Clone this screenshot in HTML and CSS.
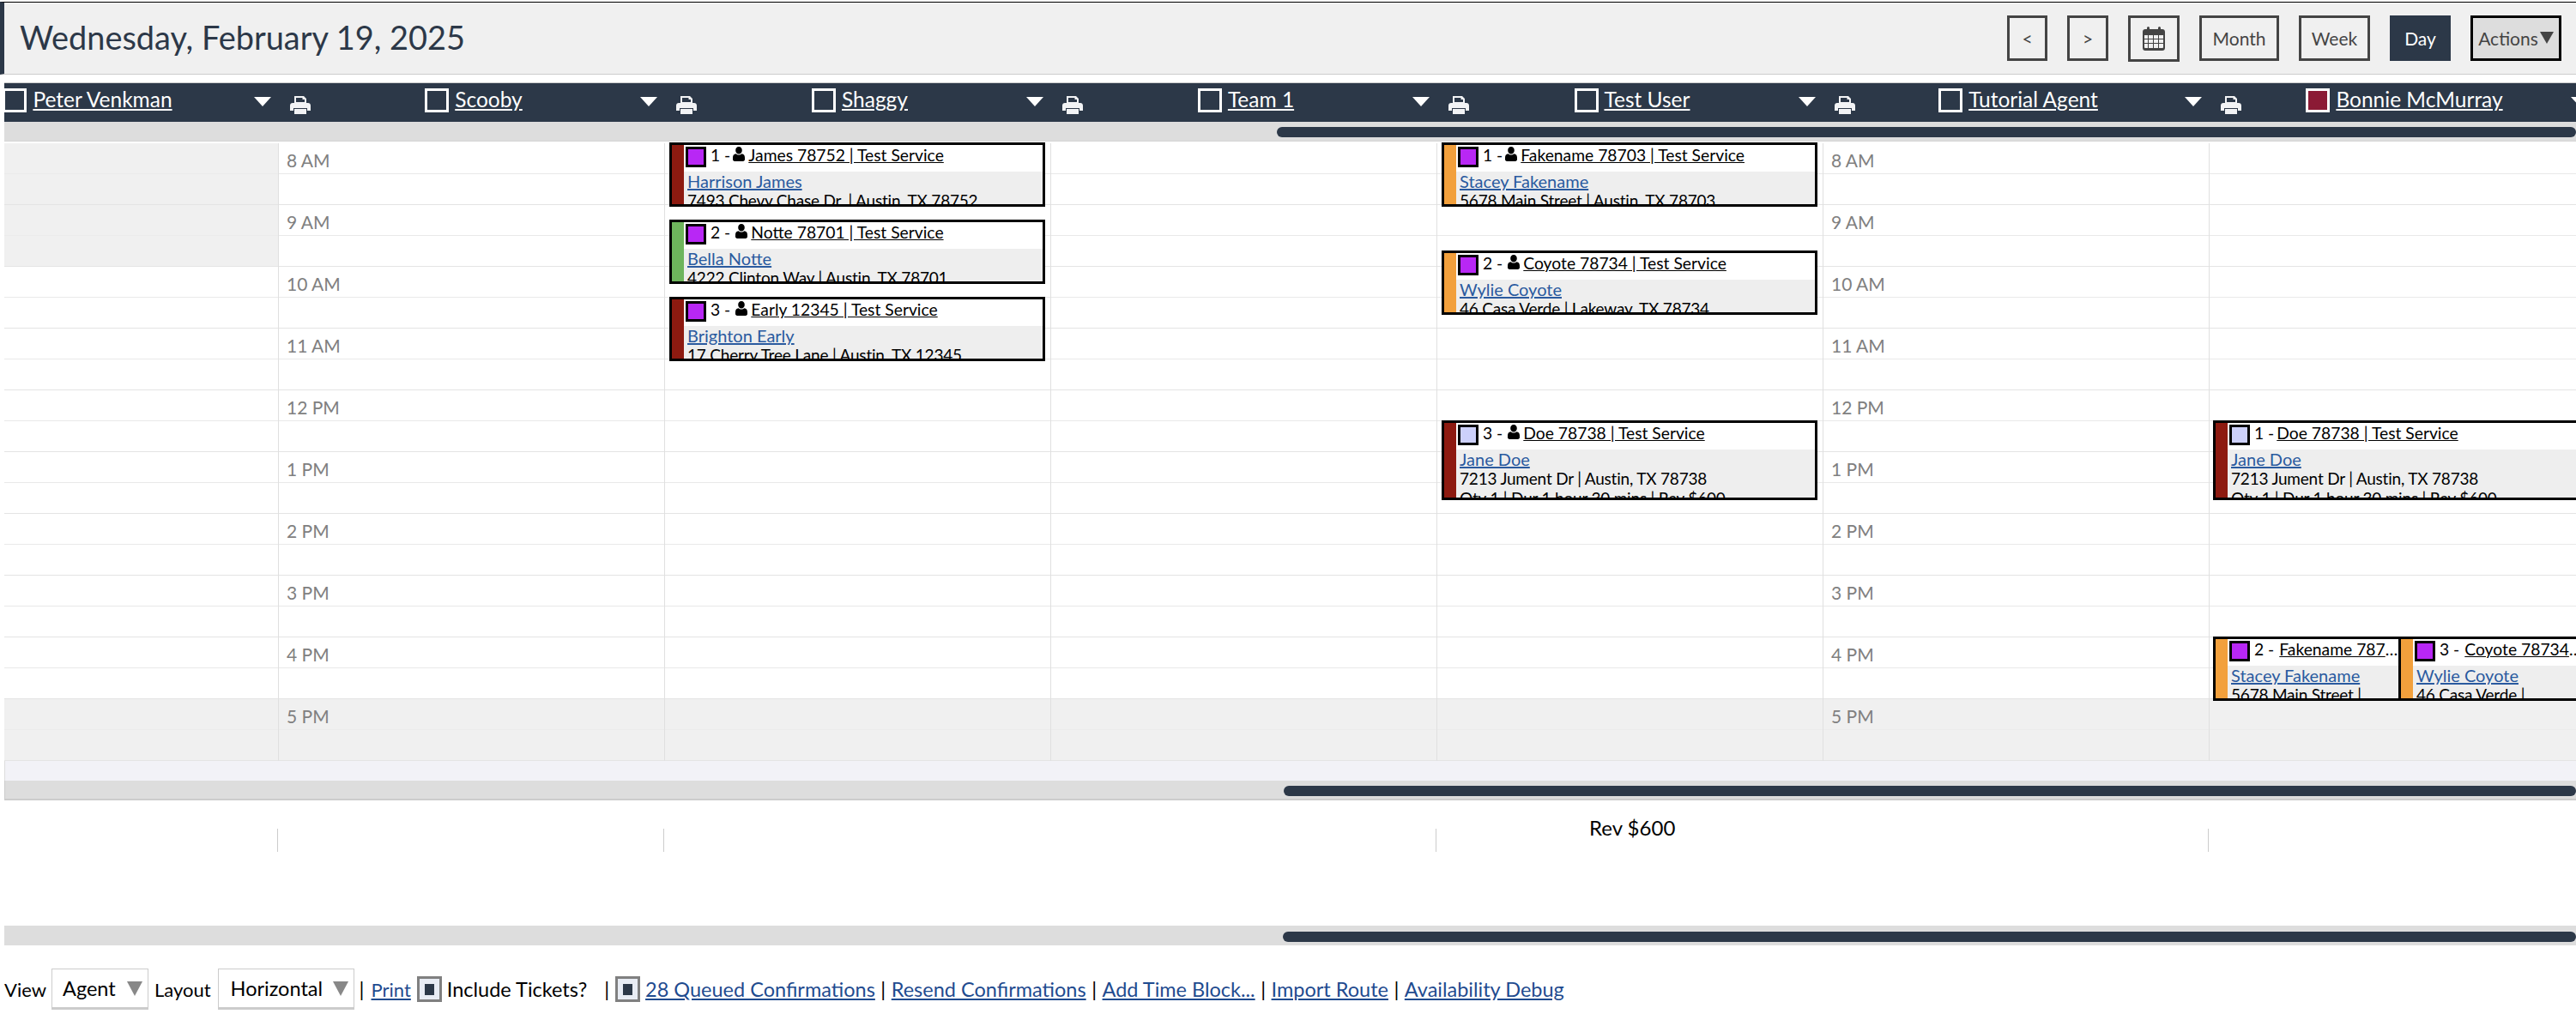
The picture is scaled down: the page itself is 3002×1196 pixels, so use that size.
FILE: index.html
```html
<!DOCTYPE html>
<html lang="en">
<head>
<meta charset="utf-8">
<title>Schedule</title>
<link rel="stylesheet" href="styles.css">
</head>
<body>
<svg class="defs" width="0" height="0" aria-hidden="true">
  <symbol id="user" viewBox="0 0 14 17"><path d="M7 0c2.300 0 3.800 1.800 3.800 4.200S9.300 8.600 7 8.600 3.200 6.600 3.200 4.200 4.700 0 7 0zM3.600 8.200C4.500 9.100 5.600 9.600 7 9.600s2.500-.5 3.400-1.400C12.700 8.400 14 10 14 12.800v2c0 1.300-.9 2.200-2.200 2.200H2.200C.9 17 0 16.100 0 14.800v-2C0 10 1.300 8.400 3.600 8.200z"/></symbol>
  <symbol id="printer" viewBox="0 0 24 22"><path d="M5 1h11l3 3v5H5zM7 3v5h10V5h-2.500V3z" fill-rule="evenodd"/><path d="M3 9h18c1.700 0 3 1.300 3 3v6h-4v-3H4v3H0v-6c0-1.700 1.300-3 3-3z"/><path d="M5 16h14v6H5z"/></symbol>
</svg>

<header class="topbar">
  <h1 class="date">Wednesday, February 19, 2025</h1>
  <nav class="views">
    <button class="btn btn-nav">&lt;</button>
    <button class="btn btn-nav btn-next">&gt;</button>
    <button class="btn btn-cal" aria-label="Calendar">
      <svg width="26" height="28" viewBox="0 0 26 28"><path fill="#444" fill-rule="evenodd" d="M5 3V1.500a1.500 1.500 0 0 1 3 0V3h10V1.500a1.500 1.500 0 0 1 3 0V3h2c1.700 0 3 1.300 3 3v19c0 1.700-1.300 3-3 3H3c-1.700 0-3-1.300-3-3V6c0-1.700 1.300-3 3-3zM2 10v4h4v-4zm5 0v4h5v-4zm6 0v4h5v-4zm6 0v4h5v-4zM2 15v4h4v-4zm5 0v4h5v-4zm6 0v4h5v-4zm6 0v4h5v-4zM2 20v4c0 .5.500 1 1 1h3v-5zm5 0v5h5v-5zm6 0v5h5v-5zm6 0v5h4c.5 0 1-.5 1-1v-4z"/></svg>
    </button>
    <button class="btn btn-month">Month</button>
    <button class="btn btn-week">Week</button>
    <button class="btn btn-day">Day</button>
    <button class="btn btn-actions">Actions<span class="tri-down"></span></button>
  </nav>
</header>

<main class="board">
  <div class="agents">
    <div class="agent"><div class="agent-name"><span class="check"></span><a href="#">Peter Venkman</a></div><span class="drop"></span><svg class="print"><use href="#printer"/></svg></div>
    <div class="agent"><div class="agent-name"><span class="check"></span><a href="#">Scooby</a></div><span class="drop"></span><svg class="print"><use href="#printer"/></svg></div>
    <div class="agent"><div class="agent-name"><span class="check"></span><a href="#">Shaggy</a></div><span class="drop"></span><svg class="print"><use href="#printer"/></svg></div>
    <div class="agent"><div class="agent-name"><span class="check"></span><a href="#">Team 1</a></div><span class="drop"></span><svg class="print"><use href="#printer"/></svg></div>
    <div class="agent"><div class="agent-name"><span class="check"></span><a href="#">Test User</a></div><span class="drop"></span><svg class="print"><use href="#printer"/></svg></div>
    <div class="agent"><div class="agent-name"><span class="check"></span><a href="#">Tutorial Agent</a></div><span class="drop"></span><svg class="print"><use href="#printer"/></svg></div>
    <div class="agent"><div class="agent-name"><span class="check check-red"></span><a href="#">Bonnie McMurray</a></div><span class="drop"></span><svg class="print"><use href="#printer"/></svg></div>
  </div>
  <div class="scroll scroll-top"><span class="thumb thumb-top"></span></div>

  <div class="grid">
    <section class="col">
      <div class="hour off"></div><div class="hour off"></div><div class="hour"></div><div class="hour"></div><div class="hour"></div>
      <div class="hour"></div><div class="hour"></div><div class="hour"></div><div class="hour"></div><div class="hour off"></div>
    </section>
    <section class="col">
      <div class="hour time">8 AM</div><div class="hour time">9 AM</div><div class="hour time">10 AM</div><div class="hour time">11 AM</div><div class="hour time">12 PM</div>
      <div class="hour time">1 PM</div><div class="hour time">2 PM</div><div class="hour time">3 PM</div><div class="hour time">4 PM</div><div class="hour time off">5 PM</div>
    </section>
    <section class="col">
      <div class="hour"></div><div class="hour"></div><div class="hour"></div><div class="hour"></div><div class="hour"></div>
      <div class="hour"></div><div class="hour"></div><div class="hour"></div><div class="hour"></div><div class="hour off"></div>
      <article class="event t166">
        <span class="bar bar-red"></span>
        <div class="event-main">
          <div class="event-head"><span class="mini"></span><span class="seq seq-one">1 -</span><svg class="user"><use href="#user"/></svg><a href="#">James 78752 | Test Service</a></div>
          <div class="event-body"><a href="#">Harrison James</a><br><span class="addr">7493 Chevy Chase Dr. | Austin, TX 78752</span></div>
        </div>
      </article>
      <article class="event t256">
        <span class="bar bar-green"></span>
        <div class="event-main">
          <div class="event-head"><span class="mini"></span><span class="seq">2 -</span><svg class="user"><use href="#user"/></svg><a href="#">Notte 78701 | Test Service</a></div>
          <div class="event-body"><a href="#">Bella Notte</a><br><span class="addr">4222 Clinton Way | Austin, TX 78701</span></div>
        </div>
      </article>
      <article class="event t346">
        <span class="bar bar-red"></span>
        <div class="event-main">
          <div class="event-head"><span class="mini"></span><span class="seq">3 -</span><svg class="user"><use href="#user"/></svg><a href="#">Early 12345 | Test Service</a></div>
          <div class="event-body"><a href="#">Brighton Early</a><br><span class="addr">17 Cherry Tree Lane | Austin, TX 12345</span></div>
        </div>
      </article>
    </section>
    <section class="col">
      <div class="hour"></div><div class="hour"></div><div class="hour"></div><div class="hour"></div><div class="hour"></div>
      <div class="hour"></div><div class="hour"></div><div class="hour"></div><div class="hour"></div><div class="hour off"></div>
    </section>
    <section class="col">
      <div class="hour"></div><div class="hour"></div><div class="hour"></div><div class="hour"></div><div class="hour"></div>
      <div class="hour"></div><div class="hour"></div><div class="hour"></div><div class="hour"></div><div class="hour off"></div>
      <article class="event t166">
        <span class="bar bar-orange"></span>
        <div class="event-main">
          <div class="event-head"><span class="mini"></span><span class="seq seq-one">1 -</span><svg class="user"><use href="#user"/></svg><a href="#">Fakename 78703 | Test Service</a></div>
          <div class="event-body"><a href="#">Stacey Fakename</a><br><span class="addr">5678 Main Street | Austin, TX 78703</span></div>
        </div>
      </article>
      <article class="event t292">
        <span class="bar bar-orange"></span>
        <div class="event-main">
          <div class="event-head"><span class="mini"></span><span class="seq">2 -</span><svg class="user"><use href="#user"/></svg><a href="#">Coyote 78734 | Test Service</a></div>
          <div class="event-body"><a href="#">Wylie Coyote</a><br><span class="addr">46 Casa Verde | Lakeway, TX 78734</span></div>
        </div>
      </article>
      <article class="event t490 tall">
        <span class="bar bar-red"></span>
        <div class="event-main">
          <div class="event-head"><span class="mini mini-pale"></span><span class="seq">3 -</span><svg class="user"><use href="#user"/></svg><a href="#">Doe 78738 | Test Service</a></div>
          <div class="event-body"><a href="#">Jane Doe</a><br><span class="addr">7213 Jument Dr | Austin, TX 78738<br>Qty 1 | Dur 1 hour 30 mins | Rev $600</span></div>
        </div>
      </article>
    </section>
    <section class="col">
      <div class="hour time">8 AM</div><div class="hour time">9 AM</div><div class="hour time">10 AM</div><div class="hour time">11 AM</div><div class="hour time">12 PM</div>
      <div class="hour time">1 PM</div><div class="hour time">2 PM</div><div class="hour time">3 PM</div><div class="hour time">4 PM</div><div class="hour time off">5 PM</div>
    </section>
    <section class="col">
      <div class="hour"></div><div class="hour"></div><div class="hour"></div><div class="hour"></div><div class="hour"></div>
      <div class="hour"></div><div class="hour"></div><div class="hour"></div><div class="hour"></div><div class="hour off"></div>
      <article class="event t490 tall edge">
        <span class="bar bar-red"></span>
        <div class="event-main">
          <div class="event-head"><span class="mini mini-pale"></span><span class="seq seq-one">1 -</span><a href="#">Doe 78738 | Test Service</a></div>
          <div class="event-body"><a href="#">Jane Doe</a><br><span class="addr">7213 Jument Dr | Austin, TX 78738<br>Qty 1 | Dur 1 hour 30 mins | Rev $600</span></div>
        </div>
      </article>
      <article class="event t742 half-left edge">
        <span class="bar bar-orange"></span>
        <div class="event-main">
          <div class="event-head"><span class="mini"></span><span class="seq">2 -</span><a href="#">Fakename 78703 | Test Service</a></div>
          <div class="event-body"><a href="#">Stacey Fakename</a><br><span class="addr">5678 Main Street | Austin, TX 78703</span></div>
        </div>
      </article>
      <article class="event t742 half-right">
        <span class="bar bar-orange"></span>
        <div class="event-main">
          <div class="event-head"><span class="mini"></span><span class="seq">3 -</span><a href="#">Coyote 78734 | Test Service</a></div>
          <div class="event-body"><a href="#">Wylie Coyote</a><br><span class="addr">46 Casa Verde | Lakeway, TX 78734</span></div>
        </div>
      </article>
    </section>
  </div>
  <div class="strip"></div>
  <div class="scroll scroll-mid"><span class="thumb thumb-mid"></span></div>
</main>

<section class="totals">
  <div class="rev">Rev $600</div>
  <span class="tick tick-1"></span><span class="tick tick-2"></span><span class="tick tick-4"></span><span class="tick tick-6"></span>
</section>

<div class="scroll scroll-bottom"><span class="thumb thumb-bottom"></span></div>

<footer class="tools">
  <span class="lbl">View</span>
  <div class="select sel-view">Agent<span class="sel-tri"></span></div>
  <span class="lbl">Layout</span>
  <div class="select sel-layout">Horizontal<span class="sel-tri"></span></div>
  <span class="sep sep-first">|</span>
  <a class="link-print" href="#">Print</a>
  <span class="box"></span>
  <span class="lbl-inc">Include Tickets?</span>
  <span class="sep sep-wide">|</span>
  <span class="box"></span>
  <a href="#">28 Queued Confirmations</a>
  <span class="sep">|</span>
  <a href="#">Resend Confirmations</a>
  <span class="sep">|</span>
  <a href="#">Add Time Block...</a>
  <span class="sep">|</span>
  <a href="#">Import Route</a>
  <span class="sep">|</span>
  <a href="#">Availability Debug</a>
</footer>
</body>
</html>
```

FILE: styles.css
```css
* { box-sizing: border-box; }
html, body { margin: 0; padding: 0; }
body {
  width: 3002px;
  height: 1196px;
  overflow: hidden;
  background: #fff;
  color: #000;
  font-family: "Lato", "Liberation Sans", sans-serif;
}
.defs { position: absolute; }
a { color: inherit; }

/* Top bar */
.topbar {
  margin-top: 2px;
  height: 85px;
  display: flex;
  align-items: center;
  justify-content: space-between;
  background: #f0f0f0;
  border-top: 1px solid #000;
  border-left: 5px solid #2c3848;
  border-bottom: 1px solid #ccc;
  padding: 0 17px 0 18px;
}
.date {
  margin: 0 0 3px;
  font-size: 37.900px;
  font-weight: 400;
  color: #2c3848;
}
.views { display: flex; gap: 23px; align-items: flex-start; }
.btn {
  height: 53px;
  padding: 0;
  background: transparent;
  border: 3px solid #444;
  color: #444;
  font: 400 21px "Lato", "Liberation Sans", sans-serif;
  display: flex;
  align-items: center;
  justify-content: center;
}
.btn-nav { width: 47px; }
.btn-next { width: 48px; }
.btn-cal { width: 60px; height: 54px; }
.btn-month { width: 93px; }
.btn-week { width: 83px; }
.btn-day { width: 71px; background: #2c3848; border-color: #2c3848; color: #fff; }
.btn-actions { width: 106px; background: #ddd; border-color: #000; gap: 2px; }
.tri-down {
  width: 0; height: 0;
  border-left: 8px solid transparent;
  border-right: 8px solid transparent;
  border-top: 14px solid #444;
}

/* Board */
.board {
  margin: 9px 0 0 5px;
  overflow: hidden;
}
.agents {
  display: flex;
  height: 46px;
  background: #2c3848;
  border-top: 1px solid #ccc;
  color: #fff;
}
.agent {
  flex: 0 0 450px;
  display: flex;
  align-items: flex-start;
  transform: translateX(-91px);
}
.agent-name {
  width: 376px;
  margin-right: 6px;
  display: flex;
  justify-content: center;
  align-items: flex-start;
  gap: 7px;
  padding-top: 6px;
  font-size: 24.500px;
  line-height: 26px;
}
.check {
  flex: none;
  width: 28px;
  height: 28px;
  border: 3px solid #fff;
}
.check-red { background: #8b1a35; }
.drop {
  flex: none;
  margin: 16px 22px 0 0;
  width: 0; height: 0;
  border-left: 10px solid transparent;
  border-right: 10px solid transparent;
  border-top: 11px solid #fff;
}
.print { flex: none; width: 24px; height: 22px; margin-top: 14px; fill: #f2f3f5; }

.scroll {
  height: 22px;
  background: #ddd;
  display: flex;
  justify-content: flex-end;
  align-items: flex-start;
  padding-top: 6px;
}
.thumb { display: block; height: 12px; background: #2c3848; border-radius: 6px; }
.thumb-top { width: 1514px; }
.scroll-top { border-bottom: 1px solid #d4d4d4; height: 23px; margin-bottom: 2px; }
.scroll-mid { height: 23px; border-bottom: 2px solid #ccc; border-left: 1px solid #ccc; }
.thumb-mid { width: 1506px; }
.scroll-bottom { margin-left: 5px; height: 23px; padding-top: 7px; }
.thumb-bottom { width: 1507px; }

/* Day grid */
.grid {
  display: flex;
  margin-left: -131px;
}
.col {
  position: relative;
  flex: 0 0 450px;
  border-left: 1px solid #e0e0e0;
}
.hour {
  height: 72px;
  border-bottom: 1px solid #e4e4e4;
  background: linear-gradient(transparent 35px, #e9e9e9 35px, #e9e9e9 36px, transparent 36px);
}
.hour.off {
  background: linear-gradient(transparent 35px, #ebebeb 35px, #ebebeb 36px, transparent 36px) #f0f0f0;
}
.time {
  padding-left: 9px;
  font-size: 21px;
  line-height: 40px;
  color: #808080;
}
.strip {
  height: 23px;
  background: #f2f2f7;
  border-left: 1px solid #ddd;
}

/* Events */
.event {
  position: absolute;
  left: 5px;
  width: 438px;
  height: 75px;
  display: flex;
  overflow: hidden;
  background: #fff;
  border: 3px solid #000;
  font-size: 20px;
  line-height: 22px;
}
.t166 { top: -1px; }
.t256 { top: 89px; }
.t346 { top: 179px; }
.t292 { top: 125px; }
.t490 { top: 323px; }
.t742 { top: 575px; }
.tall { height: 93px; }
.edge { left: 4px; }
.half-left { width: 219px; }
.half-right { left: 220px; width: 219px; }
.bar { flex: 0 0 14px; }
.bar-red { background: #8d1a10; }
.bar-green { background: #6eb55c; }
.bar-orange { background: #f2a03c; }
.event-main { flex: 1; min-width: 0; }
.event-head {
  height: 31px;
  padding-left: 2px;
  display: flex;
  align-items: flex-start;
  font-size: 19.300px;
  line-height: 23px;
  white-space: nowrap;
  overflow: hidden;
  color: #000;
}
.event-head a {
  overflow: hidden;
  text-overflow: ellipsis;
  min-width: 0;
}
.mini {
  flex: none;
  width: 24px;
  height: 24px;
  margin: 2px 5px 0 0;
  border: 3px solid #000;
  background: #b827f5;
}
.mini-pale { background: #ccd0fa; }
.seq { flex: none; margin-right: 6px; }
.seq-one { margin-right: 3px; }
.user { flex: none; width: 14px; height: 17px; margin: 2px 4px 0 0; fill: #000; }
.event-body {
  height: 100%;
  background: #eee;
  padding-left: 4px;
}
.event-body a { color: #2a5a9f; }
.addr { font-size: 19px; letter-spacing: -0.200px; }

/* Totals */
.totals {
  height: 146px;
  display: grid;
  grid-template-columns: 323px repeat(6, 450px);
  grid-template-rows: 33px 27px;
  font-size: 24px;
}
.rev { grid-column: 5; grid-row: 1; padding-left: 179px; line-height: 64px; white-space: nowrap; height: 33px; }
.tick { grid-row: 2; border-left: 1px solid #ccc; }
.tick-1 { grid-column: 2; }
.tick-2 { grid-column: 3; }
.tick-4 { grid-column: 5; }
.tick-6 { grid-column: 7; }

/* Footer tools */
.tools {
  margin-top: 27px;
  height: 48px;
  padding-left: 5px;
  display: flex;
  align-items: center;
  font-size: 23.500px;
  white-space: nowrap;
}
.tools a { color: #1f4b8f; }
.lbl, .tools .link-print { font-size: 22px; }
.select {
  height: 48px;
  margin: 0 7px 0 6px;
  display: flex;
  align-items: center;
  justify-content: space-between;
  background: #fff;
  border: 1px solid #ccc;
  border-bottom: 3px solid #ccc;
  font-size: 23.500px;
}
.sel-view { width: 113px; padding: 0 6px 0 12px; }
.sel-layout { width: 159px; margin: 0 2px 0 8px; padding: 0 6px 0 14px; }
.sel-tri {
  width: 0; height: 0;
  border-left: 9px solid transparent;
  border-right: 9px solid transparent;
  border-top: 17px solid #888;
}
.sep { margin: 0 6.500px; color: #000; }
.sep-first { margin: 0 8px 0 4px; }
.box {
  flex: none;
  width: 29px;
  height: 30px;
  margin: 0 6px 0 7px;
  border: 3px solid #808080;
  background: linear-gradient(#2c3848, #2c3848) center / 11px 13px no-repeat #e8ecf4;
}
.lbl-inc { margin-right: 13px; }
.sep-wide { margin: 0 0 0 7px; }
```
